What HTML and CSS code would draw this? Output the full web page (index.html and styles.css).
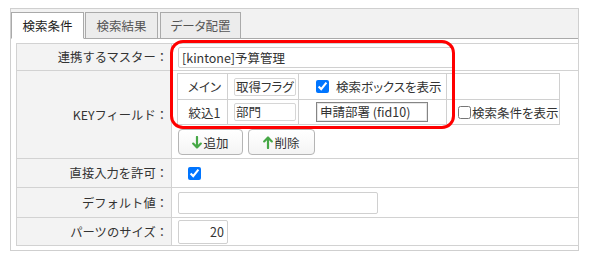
FILE: index.html
```html
<!DOCTYPE html>
<html lang="ja">
<head>
<meta charset="utf-8">
<link rel="stylesheet" href="styles.css">
</head>
<body>
<div class="frame">
  <div class="tabs">
    <div class="tab active t1">検索条件</div>
    <div class="tab t2">検索結果</div>
    <div class="tab t3">データ配置</div>
  </div>
  <div class="content">
    <table class="form">
      <colgroup><col class="c-label"><col class="c-value"></colgroup>
      <tr class="r-master">
        <th>連携するマスター：</th>
        <td><input class="txt master" value="[kintone]予算管理" readonly></td>
      </tr>
      <tr class="r-key">
        <th>KEYフィールド：</th>
        <td class="key-cell">
          <table class="keys">
            <colgroup><col class="k1"><col class="k2"><col class="k3"><col class="k4"></colgroup>
            <tr class="kr1">
              <td class="kname">メイン</td>
              <td><span class="fbox">取得フラグ</span></td>
              <td class="chk3"><label class="chk"><input type="checkbox" checked><span>検索ボックスを表示</span></label></td>
              <td></td>
            </tr>
            <tr class="kr2">
              <td class="kname">絞込1</td>
              <td><span class="fbox">部門</span></td>
              <td class="sel3"><span class="selbox">申請部署 (fid10)</span></td>
              <td class="chk4"><label class="chk tight"><input type="checkbox"><span>検索条件を表示</span></label></td>
            </tr>
          </table>
          <div class="btns">
            <button class="btn add"><svg class="arr" width="10" height="13" viewBox="0 0 10 13"><path d="M5 1V11.5M1.2 7.6L5 11.5L8.8 7.6" fill="none" stroke="#46a846" stroke-width="2.2" stroke-linecap="round" stroke-linejoin="round"/></svg>追加</button>
            <button class="btn del"><svg class="arr" width="10" height="13" viewBox="0 0 10 13"><path d="M5 12V1.5M1.2 5.4L5 1.5L8.8 5.4" fill="none" stroke="#46a846" stroke-width="2.2" stroke-linecap="round" stroke-linejoin="round"/></svg>削除</button>
          </div>
        </td>
      </tr>
      <tr class="r-direct">
        <th>直接入力を許可：</th>
        <td><input type="checkbox" class="direct" checked></td>
      </tr>
      <tr class="r-default">
        <th>デフォルト値：</th>
        <td><input class="txt dflt" value=""></td>
      </tr>
      <tr class="r-size">
        <th>パーツのサイズ：</th>
        <td><input class="txt size" value="20"></td>
      </tr>
    </table>
  </div>
  <div class="highlight"></div>
</div>
</body>
</html>
```
FILE: styles.css
```css
* { box-sizing: border-box; }
body {
  margin: 0;
  padding: 8px 0 0 10px;
  background: #fff;
  font-family: "Noto Sans CJK JP", "Noto Sans", sans-serif;
  font-size: 12.5px;
  font-feature-settings: "palt";
  color: #333;
}
.frame {
  position: relative;
  width: 569px;
  border: 1px solid #cfcfcf;
  background: #fff;
}
.tabs {
  display: flex;
  align-items: flex-end;
  height: 30px;
  background: #f2f2f2;
  border-bottom: 1px solid #aaa;
}
.tab {
  height: 27px;
  margin-bottom: -1px;
  line-height: 25px;
  text-align: center;
  border: 1px solid #aaa;
  background: #ececec;
  color: #555;
  white-space: nowrap;
}
.t1 { width: 73px; }
.t2 { width: 73px; margin-left: 1px; }
.t3 { width: 81px; margin-left: 2px; }
.tab.active {
  background: #fff;
  border-bottom-color: #fff;
  color: #222;
}
.content {
  padding: 4px 0 4px 5px;
}
.form {
  width: 563px;
  table-layout: fixed;
  border-collapse: collapse;
  border: 1px solid #cfcfcf;
}
.c-label { width: 155px; }
.form th, .form > tbody > tr > td {
  border: 1px solid #d2d2d2;
  padding: 0;
}
.form th {
  background: #f3f3f3;
  font-weight: normal;
  font-feature-settings: normal;
  font-size: 12.3px;
  text-align: right;
  padding-right: 3px;
  white-space: nowrap;
  color: #333;
}
.form > tbody > tr > td { padding-left: 6px; }
.r-master { height: 27px; }
.r-key { height: 88px; }
.r-direct { height: 29px; }
.r-default { height: 30px; }
.r-size { height: 28px; }

.txt {
  display: block;
  font: inherit;
  color: #333;
  border: 1px solid #d0d0d0;
  border-radius: 2px;
  background: #fff;
  padding: 0 3px;
  outline: none;
}
.master { width: 276px; height: 21px; }
.dflt { width: 200px; height: 22px; }
.size { width: 50px; height: 24px; text-align: right; padding-right: 3px; }

.form > tbody > tr > td.key-cell { padding: 2px 0 3px 5px; vertical-align: top; }
.keys {
  width: 382px;
  table-layout: fixed;
  border-collapse: collapse;
}
.k1 { width: 50px; }
.k2 { width: 71px; }
.k3 { width: 148px; }
.k4 { width: 113px; }
.keys td {
  border: 1px solid #d0d0d0;
  padding: 0;
  white-space: nowrap;
}
.kr1 { height: 26px; }
.kr2 { height: 25px; }
.keys td.kname { text-align: center; padding-left: 4px; }
.keys td:nth-child(2) { padding-left: 6px; }
.fbox {
  display: block;
  width: 62px;
  height: 18px;
  line-height: 16px;
  border: 1px solid #d6d6d6;
  border-radius: 2px;
  padding-left: 1px;
  overflow: hidden;
}
.keys td.chk3 { padding-left: 14px; }
.chk {
  display: flex;
  align-items: center;
}
.chk input {
  width: 13px;
  height: 13px;
  margin: 0 7px 0 3px;
}
.chk.tight input { margin: 0 1px 0 0; }
.keys td.chk4 { padding-left: 11px; }
.keys td.sel3 { padding-left: 17px; }
.selbox {
  display: block;
  width: 112px;
  height: 20px;
  line-height: 18px;
  border: 1px solid #858585;
  box-shadow: inset 0 0 0 1px #e6e6e6;
  padding-left: 3px;
  white-space: nowrap;
}
.btns {
  display: flex;
  gap: 5px;
  margin-top: 4px;
  padding-left: 1px;
}
.btn {
  display: flex;
  align-items: center;
  justify-content: center;
  font: inherit;
  color: #333;
  height: 26px;
  padding: 0;
  border: 1px solid #b5b5b5;
  border-radius: 4px;
  background: linear-gradient(#fff, #f4f4f4);
}
.add { width: 65px; }
.del { width: 67px; }
.arr { display: block; margin-right: 1px; }
.direct {
  display: block;
  width: 13px;
  height: 13px;
  margin: 0 0 0 10px;
}
.highlight {
  position: absolute;
  left: 159px;
  top: 31px;
  width: 285px;
  height: 89px;
  border: 3px solid #f00;
  border-radius: 13px;
  pointer-events: none;
}
```
